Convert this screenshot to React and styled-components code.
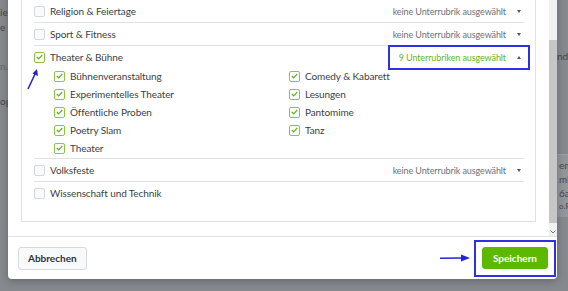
import styled, { createGlobalStyle } from 'styled-components';

const GlobalStyle = createGlobalStyle`
  html, body { margin: 0; padding: 0; }
  body {
    width: 568px;
    height: 291px;
    overflow: hidden;
    background: #85888c;
    font-family: Lato, "Open Sans", sans-serif;
  }
`;

const Screen = styled.div`
  position: relative;
  width: 568px;
  height: 291px;
  overflow: hidden;
  background: #86898d;
`;

// the dimmed page behind the dialog
const BackPage = styled.div`
  display: flex;
  justify-content: space-between;
  height: 100%;
  color: #45484c;
  font-size: 10px;
`;

const BackColumn = styled.div`
  width: ${p => p.$width}px;
  overflow: hidden;
  white-space: nowrap;
  display: flex;
  flex-direction: column;
  padding-top: ${p => p.$top}px;
  gap: ${p => p.$gap}px;
`;

const BackBox = styled.div`
  display: flex;
  flex-direction: column;
  gap: 2px;
  margin-top: 92px;
  padding: 4px 0 6px 2px;
  background: #93969a;
  border-top: 1px solid #9ea1a5;
  font-size: 10px;
`;

const Dialog = styled.div`
  position: absolute;
  left: 8px;
  top: -20px;
  width: 549px;
  height: 299px;
  background: #fff;
  border-radius: 0 0 4px 4px;
  box-shadow: 0 2px 8px rgba(0, 0, 0, 0.25);
  display: flex;
  flex-direction: column;
`;

const Body = styled.div`
  flex: 1;
  display: flex;
  min-height: 0;
`;

const Scroller = styled.div`
  flex: 1;
  padding: 0 13px;
  overflow: hidden;
`;

const Panel = styled.div`
  border: 1px solid #dfe3e8;
  border-top: none;
  padding: 20px 11px 17px 12px;
`;

const Item = styled.div`
  position: relative;
  border-bottom: ${p => (p.$last ? 'none' : '1px solid #dfe3e8')};
`;

const Row = styled.div`
  display: flex;
  align-items: center;
  height: 22px;
`;

const Box = styled.span`
  box-sizing: border-box;
  width: 11px;
  height: 11px;
  flex-shrink: 0;
  margin-right: 5px;
  border: 1px solid ${p => (p.$checked ? '#8cc63f' : '#d3d8de')};
  border-radius: 2px;
  background: ${p => (p.$checked ? '#fff' : '#f9fafb')};
  display: inline-flex;
  align-items: center;
  justify-content: center;
`;

const Label = styled.span`
  font-size: 10px;
  letter-spacing: -0.1px;
  color: #3b3f44;
  white-space: nowrap;
`;

const Select = styled.div`
  margin-left: auto;
  display: flex;
  align-items: center;
  gap: 11px;
  height: 13px;
  padding: 0 3px 0 5px;
  font-size: 9px;
  letter-spacing: -0.1px;
  color: ${p => (p.$active ? '#66b32e' : '#6b7178')};
  outline: ${p => (p.$active ? '2px solid #2f2fe3' : 'none')};
  outline-offset: 4px;
`;

const Caret = styled.span`
  width: 0;
  height: 0;
  border-left: 2.5px solid transparent;
  border-right: 2.5px solid transparent;
  ${p => (p.$up ? 'border-bottom: 3px solid #555;' : 'border-top: 3px solid #555;')}
`;

const SubGrid = styled.div`
  display: grid;
  grid-template-columns: 235px 1fr;
  grid-template-rows: repeat(5, 18px);
  grid-auto-flow: column;
  padding-left: 20px;
  margin-top: -1px;
  margin-bottom: 1px;
`;

const SubItem = styled.div`
  display: flex;
  align-items: center;
`;

const PointerUp = styled.svg`
  position: absolute;
  left: -8px;
  top: 22px;
`;

const Scrollbar = styled.div`
  width: 8px;
  background: #f1f1f1;
  display: flex;
  flex-direction: column;
  align-items: center;
`;

const Thumb = styled.div`
  width: 8px;
  height: 183px;
  margin-top: 60px;
  background: #c6c6c6;
`;

const ScrollArrow = styled.svg`
  margin-top: auto;
  margin-bottom: 2px;
`;

const Footer = styled.div`
  height: 43px;
  box-sizing: border-box;
  border-top: 1px solid #dfe3e8;
  display: flex;
  align-items: center;
  justify-content: space-between;
  padding: 0 1px 0 10px;
`;

const Button = styled.button`
  height: ${p => (p.$primary ? 22 : 23)}px;
  padding: 0 ${p => (p.$primary ? 10 : 9)}px;
  border-radius: 3px;
  border: 1px solid ${p => (p.$primary ? '#5cb800' : '#d6dadf')};
  background: ${p => (p.$primary ? '#5cb800' : '#f8f9fa')};
  color: ${p => (p.$primary ? '#fff' : '#2f3337')};
  font-family: Lato, "Open Sans", sans-serif;
  font-weight: 700;
  font-size: 10px;
`;

// annotation frame drawn around the save button
const Marked = styled.span`
  display: inline-flex;
  padding: 5px 6px 6px;
  border: 2px solid #2f2fe3;
`;

const Actions = styled.div`
  display: flex;
  align-items: center;
  gap: 4px;
`;

const Check = () => (
  <svg width="7" height="6" viewBox="0 0 7 6">
    <polyline points="0.8,3 2.7,4.8 6.2,1" fill="none" stroke="#62b12a" strokeWidth="1.2" />
  </svg>
);

const CheckBox = ({ checked }) => <Box $checked={checked}>{checked && <Check />}</Box>;

const NONE = 'keine Unterrubrik ausgewählt';

const theater = [
  'Bühnenveranstaltung',
  'Experimentelles Theater',
  'Öffentliche Proben',
  'Poetry Slam',
  'Theater',
  'Comedy & Kabarett',
  'Lesungen',
  'Pantomime',
  'Tanz',
];

const Category = ({ name, select, last }) => (
  <Item $last={last}>
    <Row>
      <CheckBox />
      <Label>{name}</Label>
      {select && (
        <Select>
          {NONE}
          <Caret />
        </Select>
      )}
    </Row>
  </Item>
);

export default function App() {
  return (
    <Screen>
      <GlobalStyle />
      <BackPage>
        <BackColumn $width={8} $top={6} $gap={3}>
          <span>ie</span>
          <span>e fr</span>
          <span style={{ marginTop: 24, color: '#65686c' }}>n.c</span>
          <span style={{ marginTop: 20 }}>og</span>
        </BackColumn>
        <BackColumn $width={11} $top={50} $gap={0}>
          <span>nd</span>
          <BackBox>
            <span>em</span>
            <span>mb</span>
            <span>6a</span>
            <span style={{ fontSize: 8 }}>o.R.</span>
          </BackBox>
        </BackColumn>
      </BackPage>

      <Dialog>
        <Body>
          <Scroller>
            <Panel>
              <Category name="Religion & Feiertage" select />
              <Category name="Sport & Fitness" select />
              <Item>
                <Row>
                  <CheckBox checked />
                  <Label>Theater &amp; Bühne</Label>
                  <Select $active>
                    9 Unterrubriken ausgewählt
                    <Caret $up />
                  </Select>
                </Row>
                <SubGrid>
                  {theater.map(t => (
                    <SubItem key={t}>
                      <CheckBox checked />
                      <Label>{t}</Label>
                    </SubItem>
                  ))}
                </SubGrid>
                <PointerUp width="14" height="22" viewBox="0 0 14 22">
                  <path d="M2 21 L9.5 5" stroke="#2424d6" strokeWidth="1.6" fill="none" />
                  <path d="M11 1 L12 8 L6.5 5.5 Z" fill="#2424d6" />
                </PointerUp>
              </Item>
              <Category name="Volksfeste" select />
              <Category name="Wissenschaft und Technik" last />
            </Panel>
          </Scroller>
          <Scrollbar>
            <Thumb />
            <ScrollArrow width="6" height="4" viewBox="0 0 6 4">
              <polyline points="0.5,0.5 3,3 5.5,0.5" fill="none" stroke="#777" strokeWidth="1" />
            </ScrollArrow>
          </Scrollbar>
        </Body>
        <Footer>
          <Button>Abbrechen</Button>
          <Actions>
            <svg width="30" height="8" viewBox="0 0 30 8">
              <path d="M0 4.2 L23 4" stroke="#2424d6" strokeWidth="1.6" />
              <path d="M30 4 L21 0.5 L21 7.5 Z" fill="#2424d6" />
            </svg>
            <Marked>
              <Button $primary>Speichern</Button>
            </Marked>
          </Actions>
        </Footer>
      </Dialog>
    </Screen>
  );
}
